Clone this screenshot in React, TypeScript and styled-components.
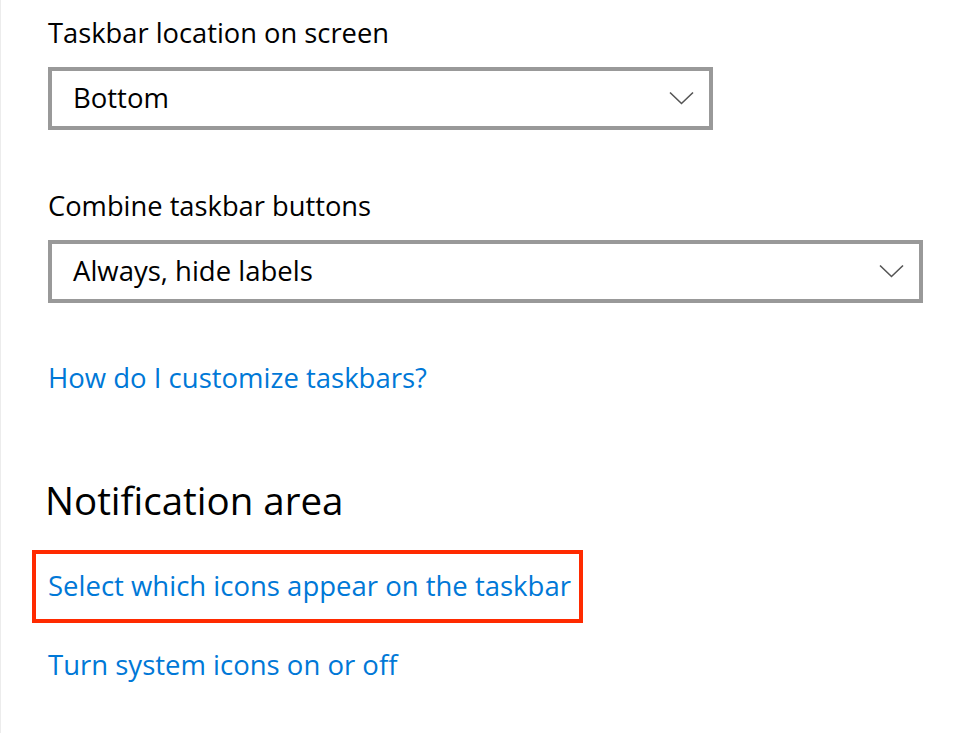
import React from "react";
import styled, { createGlobalStyle } from "styled-components";

const Global = createGlobalStyle`
  html, body { margin: 0; padding: 0; background: #ffffff; }
  body { font-family: "Open Sans", "Noto Sans", "Liberation Sans", sans-serif; }
`;

const Page = styled.div`
  box-sizing: border-box;
  width: 966px;
  height: 733px;
  border-left: 1px solid #ececec;
  padding: 17px 0 0 47px;
  display: flex;
  flex-direction: column;
  align-items: flex-start;
  overflow: hidden;
`;

const Label = styled.div<{ $gap: number }>`
  margin-top: ${(p) => p.$gap}px;
  font-size: 27.3px;
  line-height: 32px;
  color: #000000;
`;

const Select = styled.div<{ $width: number }>`
  box-sizing: border-box;
  margin-top: 18px;
  width: ${(p) => p.$width}px;
  height: 63px;
  border: 4.5px solid #999999;
  padding: 0 15px 2px 21px;
  display: flex;
  align-items: center;
  justify-content: space-between;
  font-size: 27.5px;
  line-height: 32px;
  color: #000000;
  background: #ffffff;
`;

const Chevron = () => (
  <svg width="25" height="14" viewBox="0 0 25 14" fill="none">
    <polyline points="1,1.5 12.5,12.5 24,1.5" stroke="#555555" strokeWidth="1.6" />
  </svg>
);

const Link = styled.a<{ $gap?: number }>`
  display: block;
  margin-top: ${(p) => p.$gap ?? 0}px;
  font-size: 27.5px;
  line-height: 32px;
  color: #0078d7;
  text-decoration: none;
  cursor: pointer;
`;

const Heading = styled.h2`
  margin: 84px 0 0 -3px;
  font-size: 38.5px;
  line-height: 44px;
  font-weight: 400;
  color: #000000;
`;

const Highlight = styled.div`
  margin: 28px 0 0 -16px;
  border: 4.5px solid #ff2a00;
  padding: 16px 8px 17px 12px;
`;

export default function App() {
  return (
    <>
      <Global />
      <Page>
        <Label $gap={0}>Taskbar location on screen</Label>
        <Select $width={665}>
          <span>Bottom</span>
          <Chevron />
        </Select>
        <Label $gap={60}>Combine taskbar buttons</Label>
        <Select $width={875}>
          <span>Always, hide labels</span>
          <Chevron />
        </Select>
        <Link $gap={59}>How do I customize taskbars?</Link>
        <Heading>Notification area</Heading>
        <Highlight>
          <Link>Select which icons appear on the taskbar</Link>
        </Highlight>
        <Link $gap={26}>Turn system icons on or off</Link>
      </Page>
    </>
  );
}
